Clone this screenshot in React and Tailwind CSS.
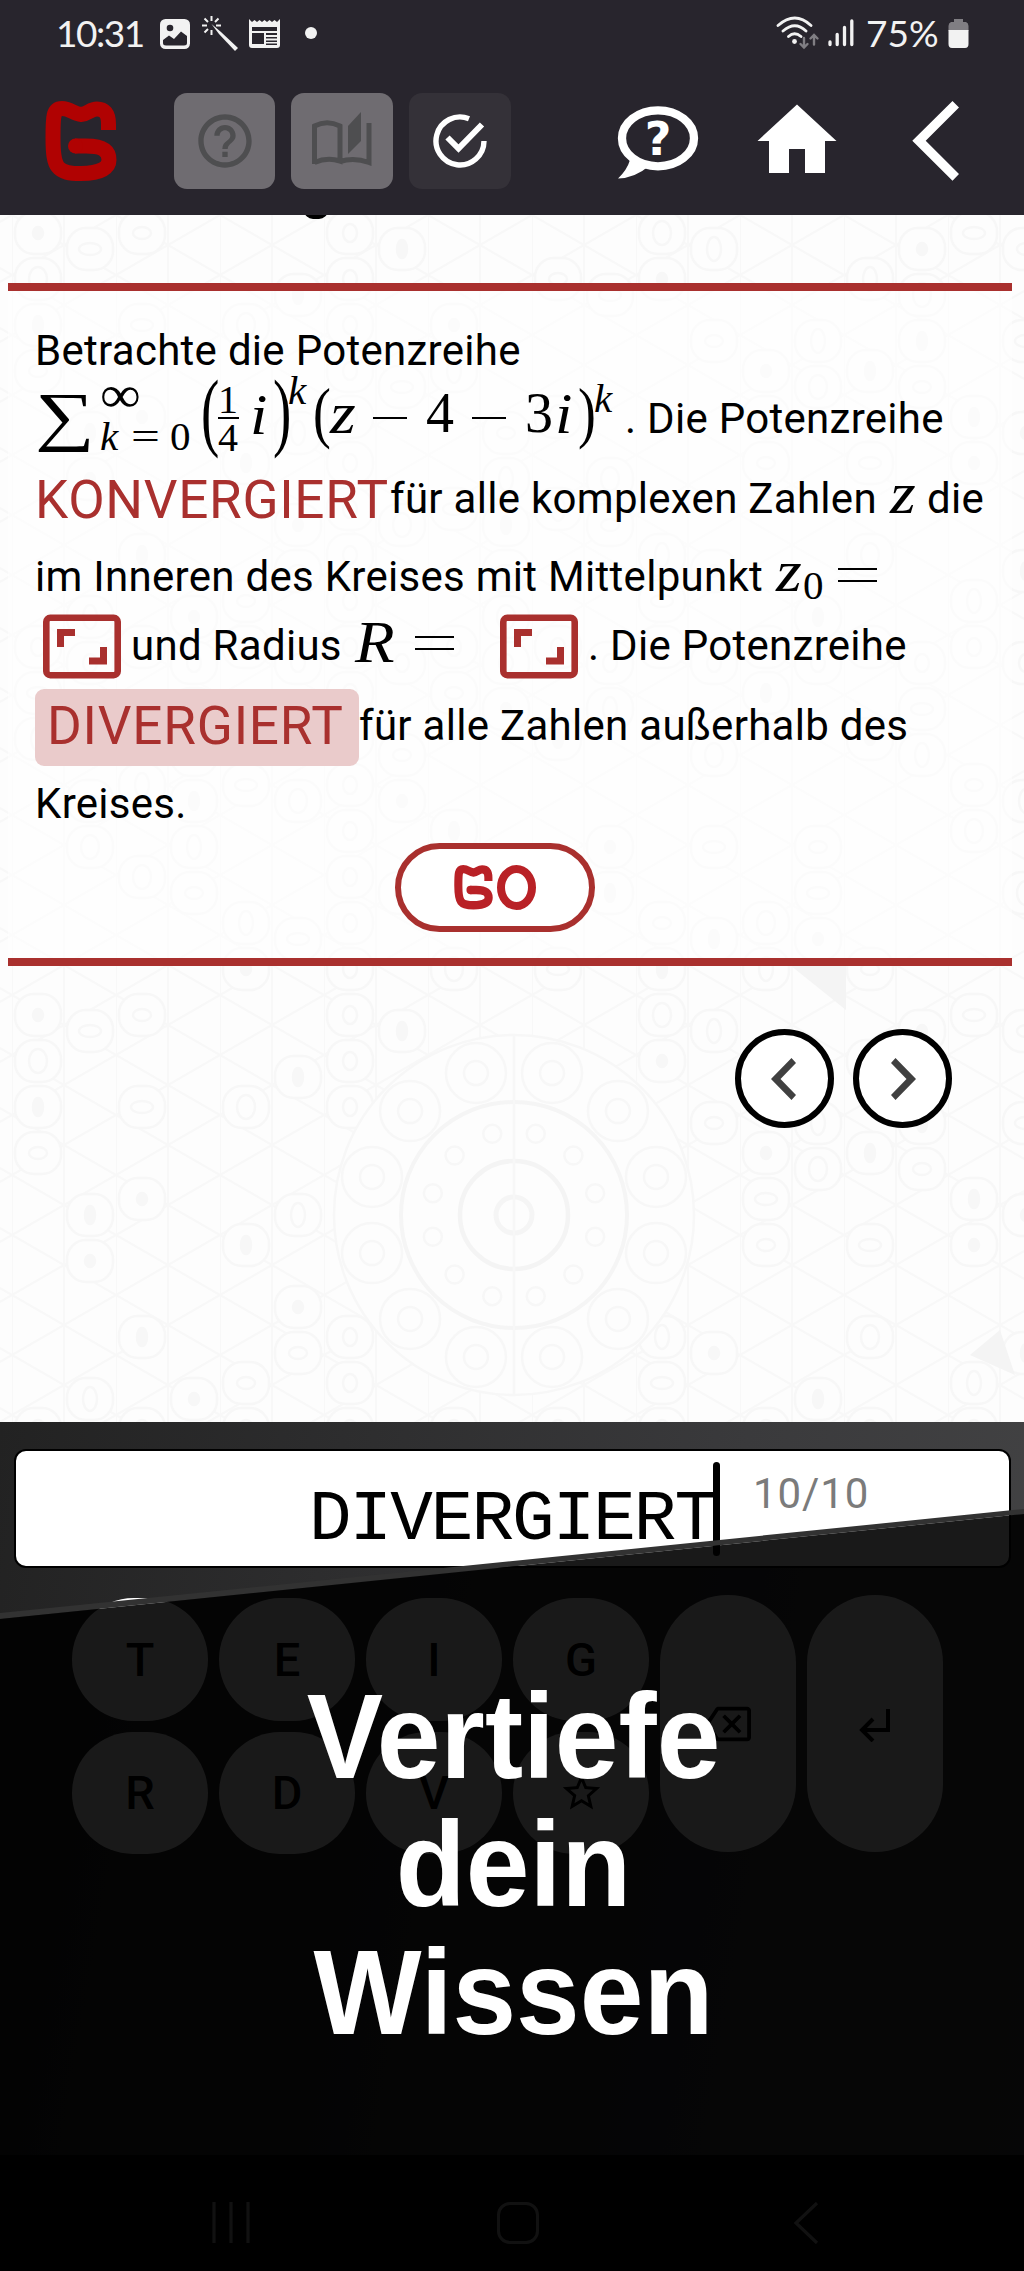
import React from "react";
import { MdHelpOutline, MdOutlineBackspace, MdStarBorder } from "react-icons/md";

const RED = "#a9302e";

function GLetter({ className, color }) {
  return (
    <svg viewBox="45 101 72 81" preserveAspectRatio="none" className={className} fill="none" stroke={color} strokeWidth="15">
      <path d="M108.500 130 V124 C108.500 113 104 109 97 109 C90 109 88 114 81 114.500 C74 114 70 108.500 62 108.500 C53 108.500 53 117 53 138 C53 168 57 173.500 81 173.500 C102 173.500 109 167 109 160 C109 149 100 146 86 146 L75 146" strokeLinejoin="round" />
      <circle cx="75.500" cy="146" r="7.500" fill={color} stroke="none" />
    </svg>
  );
}

function StatusBar() {
  return (
    <div className="flex h-[68px] items-start pl-[56px] text-[#f2f2f2]">
      <span className="mt-[14px] w-[92px] whitespace-nowrap font-['Lato'] text-[37px] leading-[37px] tracking-[-1.500px]">10:31</span>
      <svg className="ml-[12px] mt-[19px] h-[30px] w-[30px]" viewBox="0 0 30 30">
        <rect width="30" height="30" rx="5.500" fill="#f2f2f2" />
        <circle cx="10" cy="9" r="3.300" fill="#28252d" />
        <path d="M3 21 L9 16.500 L14 20 L21 12.500 L27 17 V24 Q27 26.500 24 26.500 H6 Q3 26.500 3 24 Z" fill="#28252d" />
      </svg>
      <svg className="ml-[11px] mt-[15px] h-[37px] w-[38px]" viewBox="0 0 38 37" fill="none" stroke="#f2f2f2" strokeWidth="2">
        <path d="M10.500 9 L20 17 L37 33 L34 36 L18 19 Z" fill="#f2f2f2" stroke="none" />
        <path d="M10.500 1 V6 M1 10.500 H6 M15 10.500 H20 M10.500 15 V20 M3.500 3.500 L7 7 M17.500 3.500 L14 7 M3.500 17.500 L7 14" />
      </svg>
      <svg className="ml-[10px] mt-[19px] h-[30px] w-[31px]" viewBox="0 0 31 30">
        <path d="M0 0 L3 3 L5.500 1 L8 3 L10.500 1 L13 3 L15.500 1 L18 3 L20.500 1 L23 3 L25.500 1 L28 3 L31 0 V26 Q31 29 28 29 H3 Q0 29 0 26 Z" fill="#f2f2f2" />
        <path d="M3 8 H28 V12 H3Z M3 14 H15 V25 H3Z M17 14 H28 V16 H17Z M17 18 H28 V19.500 H17Z M17 21.500 H28 V23 H17Z M17 24.500 H28 V26 H17Z" fill="#28252d" />
      </svg>
      <div className="ml-[25px] mt-[27px] h-[12px] w-[12px] rounded-full bg-[#f2f2f2]" />
      <svg className="ml-[459px] mt-[15px] h-[35px] w-[44px]" viewBox="0 0 44 35" fill="none" strokeLinecap="round">
        <path d="M2 10.500 Q19 -4.500 35 10.500 M7 16 Q19 5.500 30 16 M12.500 21.500 Q18.500 16 25 21.500" stroke="#f2f2f2" strokeWidth="2.800" />
        <circle cx="18.500" cy="26.500" r="2.400" fill="#f2f2f2" />
        <path d="M28 23 V32 M24.500 29 L28 32.500 L31.500 29 M38 29.500 V20.500 M34.500 23.500 L38 20 L41.500 23.500" stroke="#807e83" strokeWidth="2.400" />
      </svg>
      <svg className="ml-[8px] mt-[19px] h-[28px] w-[26px]" viewBox="0 0 26 28" stroke="#f2f2f2" strokeWidth="3.300" strokeLinecap="round">
        <path d="M2 23 V25.500 M9.200 15.500 V25.500 M16.500 8.500 V25.500 M23.800 2 V25.500" />
      </svg>
      <span className="ml-[12px] mt-[14px] w-[77px] whitespace-nowrap font-['Lato'] text-[37px] leading-[37px] tracking-[0px]">75%</span>
      <svg className="ml-[5px] mt-[18px] h-[30px] w-[21px]" viewBox="0 0 21 30">
        <path d="M6 1 H15 V4 H18 Q20.500 5 20.500 8 V13 H0.500 V8 Q0.500 5 3 4 H6 Z" fill="#807e83" />
        <path d="M0.500 12 H20.500 V26 Q20.500 30 17 30 H4 Q0.500 30 0.500 26 Z" fill="#f2f2f2" />
      </svg>
    </div>
  );
}

function Toolbar() {
  return (
    <div className="flex h-[147px] items-start pt-[25px]">
      <GLetter className="ml-[45px] mt-[8px] h-[81px] w-[72px]" color="#b00202" />
      <div className="ml-[57px] flex h-[96px] w-[101px] items-center justify-center rounded-[13px] bg-[#6f6c71]">
        <MdHelpOutline className="h-[64px] w-[64px] text-[#4e4e50]" />
      </div>
      <div className="ml-[16px] flex h-[96px] w-[102px] items-center justify-center rounded-[13px] bg-[#6f6c71]">
        <svg className="mb-[4px] h-[54px] w-[60px]" viewBox="0 0 60 54" fill="none" stroke="#4e4e50" strokeWidth="5">
          <path d="M2.500 52 V14 Q15 7.500 28 14 V49 Q15 45 2.500 50.500 M28 49.500 Q42 45 57 50.500 V11" />
          <path d="M36 14 L49 0 V29 L36 42 Z" fill="#4e4e50" stroke="none" />
        </svg>
      </div>
      <div className="ml-[16px] flex h-[96px] w-[102px] items-center justify-center rounded-[13px] bg-[#343138]">
        <svg className="h-[54px] w-[54px]" viewBox="0 0 54 54" fill="none" stroke="#fff" strokeWidth="5.400">
          <path d="M51 27 A24 24 0 1 1 36 4.700" />
          <path d="M14.500 23.500 L25.500 34.500 L49 10.500" strokeWidth="6" />
        </svg>
      </div>
      <svg className="ml-[106px] mt-[11px] h-[76px] w-[82px]" viewBox="0 0 82 76">
        <ellipse cx="41" cy="34.300" rx="36" ry="28" fill="none" stroke="#fff" strokeWidth="8.300" />
        <path d="M13 56 Q10 66 1 74.500 Q18 74 32 62 Z" fill="#fff" />
        <text x="41" y="50.500" textAnchor="middle" fontFamily="DejaVu Sans" fontWeight="700" fontSize="46" fill="#fff">?</text>
      </svg>
      <svg className="ml-[58px] mt-[11px] h-[70px] w-[80px]" viewBox="0 0 80 70">
        <path d="M40 0.500 L79.500 37 H68 V69 H48 V45 H32 V69 H12 V37 H0.500 Z" fill="#fff" />
      </svg>
      <svg className="ml-[75px] mt-[8px] h-[80px] w-[48px]" viewBox="0 0 48 80">
        <path d="M40.500 0 L47 6.500 L13.700 39.700 L47 73 L40.500 79.700 L0.300 39.700 Z" fill="#fff" />
      </svg>
    </div>
  );
}

// Faint line art: triangular lattice, scattered rings and a central mandala.
function Doodles() {
  const ringsList = [];
  for (let c = 0; c < 20; c++) {
    for (let r = 0; r < 27; r++) {
      const n = (c * 37 + r * 53 + c * r * 11) % 17;
      const x = 38 + c * 52;
      const y = 18 + r * 46 + (c % 2) * 16;
      const d = Math.hypot(x - 514, y - 1000);
      if (n < 7 && d > 190) ringsList.push([x, y, n]);
    }
  }
  const petals = Array.from({ length: 12 }, (_, i) => (i * Math.PI) / 6 + Math.PI / 12);
  return (
    <svg className="absolute inset-0 h-full w-full" viewBox="0 0 1024 1207" fill="none" stroke="#f7f7f7" strokeWidth="2.500">
      <defs>
        <pattern id="lattice" width="104" height="120" patternUnits="userSpaceOnUse" x="12">
          <path d="M0 0 V120 M52 0 V120 M0 0 L104 60 L0 120 M104 0 L0 60 L104 120" stroke="#f8f8f8" strokeWidth="2.200" fill="none" />
        </pattern>
      </defs>
      <rect width="1024" height="1207" fill="url(#lattice)" stroke="none" />
      {ringsList.map(([x, y, n], i) => (
        <g key={i}>
          <rect x={x - 23} y={y - 21} width="46" height="42" rx="19" fill="#fdfdfd" />
          <ellipse cx={x} cy={y} rx={5 + (n % 4) * 2} ry={6 + (n % 3) * 3} fill={n % 4 === 0 ? "#f7f7f7" : "none"} />
        </g>
      ))}
      <circle cx="514" cy="1000" r="180" fill="#fdfdfd" />
      <circle cx="514" cy="1000" r="113" stroke="#f5f5f5" strokeWidth="4" />
      <circle cx="514" cy="1000" r="54" stroke="#f4f4f4" strokeWidth="4.500" />
      <circle cx="514" cy="1000" r="18" stroke="#f5f5f5" strokeWidth="5" />
      <path d="M514 820 V1180" />
      {petals.map((a, i) => (
        <g key={i}>
          <circle cx={514 + 147 * Math.cos(a)} cy={1000 + 147 * Math.sin(a)} r="30" />
          <circle cx={514 + 147 * Math.cos(a)} cy={1000 + 147 * Math.sin(a)} r="12" />
          <circle cx={514 + 84 * Math.cos(a)} cy={1000 + 84 * Math.sin(a)} r="9" />
        </g>
      ))}
      <path d="M790 750 H846 V795 Z M970 1140 L1000 1115 L1015 1160 Z" fill="#f4f4f4" stroke="none" />
    </svg>
  );
}

const rm = "whitespace-nowrap font-['Roboto'] text-[42px] leading-[42px] tracking-[0.290px] shrink-0";
const m = "whitespace-nowrap font-['Liberation_Serif'] shrink-0";

function Gap({ className }) {
  return (
    <svg className={className} viewBox="0 0 78 64">
      <rect x="3.300" y="3.300" width="71.400" height="57.400" rx="4" fill="none" stroke={RED} strokeWidth="6.600" />
      <path d="M14 14.500 H32 V21.500 H21 V32.500 H14 Z M64 50 H46 V43 H57 V32.500 H64 Z" fill={RED} />
    </svg>
  );
}

function Question() {
  return (
    <section className="relative mx-[8px] mt-[67.500px] flex h-[683.500px] w-[1004px] flex-col border-y-[8.500px] border-[#a9302e] bg-white/50 pl-[27px] text-black">
      <div className="flex h-[80px] items-start">
        <span className={rm + " mt-[39.500px] w-[485px]"}>Betrachte die Potenzreihe</span>
      </div>
      {/* power series */}
      <div className="flex h-[95px] items-start">
        <span className={m + " mt-[12px] w-[63px] origin-left scale-x-[1.270] text-[66px] leading-[66px]"}>∑</span>
        <div className="flex w-[98px] flex-col pl-[2px]">
          <span className={m + " mt-[2px] h-[40px] w-[40px] origin-left scale-x-[1.100] text-[52px] leading-[44px]"}>∞</span>
          <div className="mt-[3px] flex h-[41px] items-start">
            <span className={m + " w-[31px] text-[41px] italic leading-[41px]"}>k</span>
            <span className={m + " w-[39px] origin-left scale-x-[1.250] text-[41px] leading-[41px]"}>=</span>
            <span className={m + " text-[41px] leading-[41px]"}>0</span>
          </div>
        </div>
        <span className={m + " ml-[5px] mt-[-3px] w-[16px] origin-left scale-x-[0.640] text-[86px] leading-[86px]"}>(</span>
        <div className="mt-[9px] flex w-[22px] flex-col items-center">
          <span className={m + " h-[37px] text-[40px] leading-[40px]"}>1</span>
          <span className="h-[2.500px] w-[21px] bg-black" />
          <span className={m + " h-[38px] text-[40px] leading-[38px]"}>4</span>
        </div>
        <span className={m + " ml-[11px] mt-[15px] w-[20px] origin-left scale-x-[1.100] text-[57px] italic leading-[57px]"}>i</span>
        <span className={m + " ml-[3px] mt-[-3px] w-[16px] origin-left scale-x-[0.640] text-[86px] leading-[86px]"}>)</span>
        <span className={m + " ml-[-1px] mt-[-1px] w-[22px] text-[41px] italic leading-[41px]"}>k</span>
        <span className={m + " ml-[3px] mt-[8px] w-[17px] origin-left scale-x-[0.800] text-[67px] leading-[67px]"}>(</span>
        <span className={m + " mt-[13px] w-[40px] origin-left scale-x-[1.120] text-[59px] italic leading-[59px]"}>z</span>
        <span className="ml-[3px] mt-[46px] h-[2.500px] w-[34px] bg-black" />
        <span className={m + " ml-[19px] mt-[14px] w-[46px] text-[56px] leading-[56px]"}>4</span>
        <span className="mt-[46px] h-[2.500px] w-[34px] bg-black" />
        <span className={m + " ml-[19px] mt-[14px] w-[30px] text-[56px] leading-[56px]"}>3</span>
        <span className={m + " mt-[14px] w-[18px] origin-left scale-x-[1.100] text-[57px] italic leading-[57px]"}>i</span>
        <span className={m + " ml-[5px] mt-[8px] w-[16px] origin-left scale-x-[0.800] text-[67px] leading-[67px]"}>)</span>
        <span className={m + " mt-[7px] w-[31px] text-[41px] italic leading-[41px]"}>k</span>
        <span className={rm + " mt-[27.500px]"}>. Die Potenzreihe</span>
      </div>
      {/* convergence */}
      <div className="flex h-[85px] items-start">
        <span className="mt-[8.500px] w-[355px] shrink-0 whitespace-nowrap font-['Roboto'] text-[53px] leading-[53px] tracking-[0.700px] text-[#a9302e]">KONVERGIERT</span>
        <span className={rm + " mt-[12.500px] w-[490px]"}>für alle komplexen Zahlen</span>
        <span className={m + " ml-[10px] mt-[-2px] w-[37px] origin-left scale-x-[1.120] text-[59px] italic leading-[59px]"}>z</span>
        <span className={rm + " mt-[12.500px]"}>die</span>
      </div>
      {/* centre of the disc */}
      <div className="flex h-[62px] items-start">
        <span className={rm + " mt-[5.500px] w-[730px]"}>im Inneren des Kreises mit Mittelpunkt</span>
        <span className={m + " ml-[11px] mt-[-9px] w-[27px] origin-left scale-x-[1.120] text-[59px] italic leading-[59px]"}>z</span>
        <span className={m + " mt-[14px] w-[35px] text-[41px] leading-[41px]"}>0</span>
        <span className="mt-[17px] h-[14px] w-[39px] border-y-[2.500px] border-black" />
      </div>
      {/* radius */}
      <div className="flex h-[76px] items-start">
        <Gap className="ml-[8px] mt-[1px] h-[65px] w-[78px]" />
        <span className={rm + " ml-[10px] mt-[12.500px] w-[210px]"}>und Radius</span>
        <span className={m + " ml-[14px] mt-[-1px] w-[60px] origin-left scale-x-[1.080] text-[60px] italic leading-[60px]"}>R</span>
        <span className="mt-[23px] h-[14px] w-[39px] border-y-[2.500px] border-black" />
        <Gap className="ml-[46px] mt-[1px] h-[65px] w-[78px]" />
        <span className={rm + " ml-[10px] mt-[12.500px]"}>. Die Potenzreihe</span>
      </div>
      {/* divergence */}
      <div className="flex h-[90px] items-start">
        <span className="h-[77px] w-[324px] shrink-0 whitespace-nowrap rounded-[9px] bg-[#eacbcb] pl-[12px] pt-[11px] font-['Roboto'] text-[53px] leading-[53px] tracking-[0.800px] text-[#a9302e]">DIVERGIERT</span>
        <span className={rm + " mt-[16.500px]"}>für alle Zahlen außerhalb des</span>
      </div>
      <div className="flex h-[64px] items-start">
        <span className={rm + " mt-[4px]"}>Kreises.</span>
      </div>
      <div className="ml-[360px] flex h-[89px] w-[200px] items-center justify-center gap-[4px] rounded-full border-[6.500px] border-[#a9302e] bg-white">
        <GLetter className="h-[45px] w-[39px]" color="#b92126" />
        <svg className="h-[45px] w-[39px]" viewBox="0 0 39 45">
          <ellipse cx="19.500" cy="22.500" rx="15.500" ry="18.500" fill="none" stroke="#b92126" strokeWidth="8" />
        </svg>
      </div>
    </section>
  );
}

function RoundButton({ flip }) {
  return (
    <button className="flex h-[99px] w-[99px] items-center justify-center rounded-full border-[6.500px] border-black bg-white">
      <svg className={flip ? "ml-[2px] h-[42px] w-[25px] rotate-180" : "mr-[2px] h-[42px] w-[25px]"} viewBox="0 0 25 42">
        <path d="M20.500 0 L25 5 L9.500 21 L25 37 L20.500 42 L0 21 Z" fill="#404040" />
      </svg>
    </button>
  );
}

function Key({ children }) {
  return (
    <div className="flex h-[122.500px] w-[136px] items-center justify-center rounded-[62px] bg-white font-['Roboto'] text-[47px] font-medium leading-none text-black">{children}</div>
  );
}

function Keyboard() {
  return (
    <div className="flex h-[733px] flex-col bg-[linear-gradient(100deg,#222222_0%,#2d2d2e_30%,#3a3a3c_65%,#444445_100%)]">
      <div className="ml-[14px] mt-[27px] flex h-[119px] w-[997px] items-start rounded-[12px] border-[2px] border-black bg-white">
        <span className="ml-[293px] mt-[34px] w-[404px] shrink-0 whitespace-nowrap font-['Liberation_Mono'] text-[71px] leading-[71px] tracking-[-2px] text-black">DIVERGIERT</span>
        <div className="mt-[11px] h-[94px] w-[7px] shrink-0 rounded-full bg-black" />
        <span className="ml-[33px] mt-[22px] font-['Roboto'] text-[42px] leading-[42px] tracking-[0.900px] text-[#7b7b7b]">10/10</span>
      </div>
      <div className="ml-[72px] mt-[27px] flex gap-[11px]">
        <div className="mt-[3px] grid grid-cols-4 gap-x-[11px] gap-y-[11px]">
          {["T", "E", "I", "G", "R", "D", "V"].map((k) => (
            <Key key={k}>{k}</Key>
          ))}
          <Key>
            <MdStarBorder className="h-[45px] w-[45px]" />
          </Key>
        </div>
        <div className="flex h-[257px] w-[136px] items-center justify-center rounded-[68px] bg-white text-black">
          <MdOutlineBackspace className="h-[46px] w-[46px]" />
        </div>
        <div className="flex h-[257px] w-[136px] items-center justify-center rounded-[68px] bg-white">
          <svg className="mt-[2px] h-[34px] w-[32px]" viewBox="0 0 32 34" fill="none" stroke="#000" strokeWidth="4">
            <path d="M29 1 V22 H4 M14 11 L3 22 L14 33" />
          </svg>
        </div>
      </div>
    </div>
  );
}

export default function App() {
  return (
    <div className="relative flex h-[2271px] w-[1024px] flex-col overflow-hidden bg-[#28252d]">
      <header className="h-[215px]">
        <StatusBar />
        <Toolbar />
      </header>
      <main className="relative h-[1207px] overflow-hidden bg-[#fdfdfd]">
        <Doodles />
        <div className="absolute left-[304px] top-[-14px] h-[18px] w-[24px] rounded-full bg-black" />
        <Question />
        <div className="relative ml-[735px] mt-[63px] flex gap-[19px]">
          <RoundButton />
          <RoundButton flip />
        </div>
      </main>
      <Keyboard />
      <nav className="flex h-[116px] items-start bg-black pt-[47px]">
        <svg className="ml-[211px] h-[42px] w-[40px]" viewBox="0 0 40 42" stroke="#b0b0b0" strokeWidth="3.200">
          <path d="M3 0 V41 M20 0 V41 M37 0 V41" />
        </svg>
        <div className="ml-[246px] h-[42px] w-[42px] rounded-[13px] border-[3.500px] border-[#b0b0b0]" />
        <svg className="ml-[254px] h-[42px] w-[26px]" viewBox="0 0 26 42" fill="none" stroke="#b0b0b0" strokeWidth="3.200">
          <path d="M24 1 L3 21 L24 41" />
        </svg>
      </nav>
      <div className="absolute inset-x-0 top-[1509px] h-[110px] bg-[#323232] [clip-path:polygon(0_104px,100%_0,100%_5px,0_110px)]" />
      <div className="absolute inset-x-0 top-[1514px] h-[757px] bg-black/90 [clip-path:polygon(0_105px,100%_0,100%_100%,0_100%)]">
        <h1 className="mt-[158px] origin-top scale-y-[1.045] pl-[3px] text-center font-['Liberation_Sans'] text-[114.500px] font-bold leading-[122.500px] text-white">
          Vertiefe
          <br />
          dein
          <br />
          Wissen
        </h1>
      </div>
    </div>
  );
}
